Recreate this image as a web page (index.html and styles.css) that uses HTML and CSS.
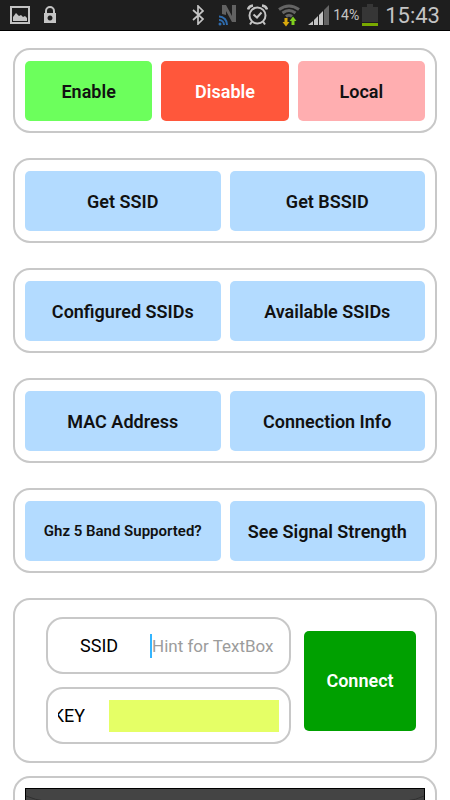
FILE: index.html
```html
<!DOCTYPE html>
<html lang="en">
<head>
    <meta charset="UTF-8">
    <meta name="viewport" content="width=device-width, initial-scale=1.0">
    <title>Wifi Manager</title>
    <link rel="stylesheet" href="styles.css">
</head>
<body>
    <header class="status-bar">
        <div class="status-left">
            <svg width="20" height="18" viewBox="0 0 20 18">
                <rect x="1" y="1" width="18" height="16" fill="none" stroke="#c4c4c4" stroke-width="2"/>
                <path d="M3 15V11L6 7L9 10L11 9L13 11L15 10L17 12V15Z" fill="#c4c4c4"/>
            </svg>
            <svg width="14" height="18" viewBox="0 0 14 18">
                <path d="M3 8V5a4 4 0 0 1 8 0V8" fill="none" stroke="#c4c4c4" stroke-width="2"/>
                <path d="M1 7H13V17H1ZM7 9.500a2.500 2.500 0 1 0 .01 0Z" fill="#c4c4c4" fill-rule="evenodd"/>
            </svg>
        </div>
        <div class="status-right">
            <svg width="12" height="20" viewBox="0 0 12 20">
                <path d="M1 5L11 14L6 19V1L11 6L1 15" fill="none" stroke="#c4c4c4" stroke-width="1.700"/>
            </svg>
            <svg class="nfc" width="19" height="22" viewBox="0 0 19 22">
                <path d="M4 10V1H8L14 12V1H18V18H14L8 7V11Z" fill="#626262"/>
                <g fill="none" stroke="#2f6cae" stroke-width="2">
                    <path d="M1 12.500a8 8 0 0 1 8 8.500"/>
                    <path d="M1 16a5 5 0 0 1 5 5"/>
                </g>
                <circle cx="2" cy="20" r="1.500" fill="#2f6cae"/>
            </svg>
            <svg class="alarm" width="21" height="22" viewBox="0 0 21 22">
                <g fill="none" stroke="#c4c4c4" stroke-width="2">
                    <circle cx="10.500" cy="11.500" r="8"/>
                    <path d="M6.500 10.500L10 13.500L14.500 8.500"/>
                    <path d="M1 5.500Q2 2 6 1.500M15 1.500Q19 2 20 5.500" stroke-width="2.500"/>
                    <path d="M5 17.500L3 20.500M16 17.500L18 20.500"/>
                </g>
            </svg>
            <svg class="wifi" width="22" height="23" viewBox="0 0 22 23">
                <g fill="none" stroke="#646464" stroke-width="3">
                    <path d="M1 5.500Q11 -1.500 21 5.500"/>
                    <path d="M4.500 9Q11 4 17.500 9"/>
                    <path d="M8 12.500Q11 10 14 12.500"/>
                </g>
                <path d="M6.500 14H9.500V18H11.500L8 22.500L4.500 18H6.500Z" fill="#d9a90c"/>
                <path d="M13.500 21V17H11.500L15 12.500L18.500 17H16.500V21Z" fill="#80d01e"/>
            </svg>
            <svg class="signal" width="21" height="21" viewBox="0 0 21 21">
                <path d="M0 20L5 16V20ZM6 15L10 11V20H6ZM11 10L15 6V20H11Z" fill="#c4c4c4"/>
                <path d="M16 5L21 0V20H16Z" fill="#646464"/>
            </svg>
            <span class="percent">14%</span>
            <svg width="16" height="22" viewBox="0 0 16 22">
                <path d="M0 3H5V0H11V3H16V18H0Z" fill="#363636"/>
                <path d="M0 19H16V22H0Z" fill="#79aa00"/>
            </svg>
            <span class="clock">15:43</span>
        </div>
    </header>

    <main class="content">
        <section class="card row">
            <button class="btn enable">Enable</button>
            <button class="btn disable">Disable</button>
            <button class="btn local">Local</button>
        </section>
        <section class="card row">
            <button class="btn">Get SSID</button>
            <button class="btn">Get BSSID</button>
        </section>
        <section class="card row">
            <button class="btn">Configured SSIDs</button>
            <button class="btn">Available SSIDs</button>
        </section>
        <section class="card row">
            <button class="btn">MAC Address</button>
            <button class="btn">Connection Info</button>
        </section>
        <section class="card row">
            <button class="btn small">Ghz 5 Band Supported?</button>
            <button class="btn">See Signal Strength</button>
        </section>

        <form class="card connect-card">
            <div class="fields">
                <div class="field ssid-field">
                    <label for="ssid">SSID</label>
                    <div class="ssid-box">
                        <input type="text" id="ssid" placeholder="Hint for TextBox">
                    </div>
                </div>
                <div class="field key-field">
                    <label for="key"><span>KEY</span></label>
                    <input type="text" id="key">
                </div>
            </div>
            <button type="button" class="btn connect">Connect</button>
        </form>

        <section class="card log-card">
            <div class="canvas">
                <svg width="100" height="12" viewBox="0 0 100 12"><path d="M0 7Q10 11 18 12" fill="none" stroke="#303030"/></svg>
                <svg width="100" height="12" viewBox="0 0 100 12"><path d="M100 7Q92 11 82 12" fill="none" stroke="#303030"/></svg>
            </div>
        </section>
    </main>
</body>
</html>
```

FILE: styles.css
```css
* {
    box-sizing: border-box;
}

body {
    margin: 0;
    height: 100vh;
    display: flex;
    flex-direction: column;
    background-color: white;
    color: #111;
    font-family: Roboto, sans-serif;
}

.status-bar {
    display: flex;
    justify-content: space-between;
    align-items: center;
    flex-shrink: 0;
    height: 31px;
    padding: 0 10px;
    background-color: #1e1e1e;
    border-bottom: 1px solid black;
    color: #c4c4c4;
}

.status-left,
.status-right {
    display: flex;
    align-items: center;
}

.status-left {
    gap: 13px;
}

.nfc {
    margin-left: 14px;
}

.alarm,
.wifi {
    margin-left: 10px;
}

.signal {
    margin-left: 8px;
}

.percent {
    margin: 0 3px 0 4px;
    font-size: 14px;
}

.clock {
    margin-left: 7px;
    font-size: 22px;
}

.content {
    flex: 1;
    overflow-y: auto;
    scrollbar-width: none;
    padding: 17px 13px;
}

.card {
    margin-bottom: 25px;
    padding: 11px 10px 10px;
    border: 2px solid #c8c8c8;
    border-radius: 17px;
}

.row {
    display: flex;
    gap: 9px;
}

.btn {
    flex: 1 1 0;
    height: 60px;
    padding: 0;
    border: none;
    border-radius: 5px;
    background-color: #b3dbff;
    color: #111;
    font-family: inherit;
    font-size: 18px;
    font-weight: 600;
    cursor: pointer;
}

.small {
    font-size: 15px;
}

.enable {
    background-color: #6cff5c;
}

.disable {
    background-color: #ff573b;
    color: white;
}

.local {
    background-color: #ffaeb0;
}

.connect-card {
    display: flex;
    align-items: center;
    gap: 13px;
    margin-bottom: 13px;
    padding: 17px 19px 17px 31px;
}

.fields {
    flex: 1;
    display: flex;
    flex-direction: column;
    gap: 13px;
    min-width: 0;
}

.field {
    display: flex;
    align-items: center;
    height: 57px;
    padding: 0 10px;
    border: 2px solid #c8c8c8;
    border-radius: 17px;
    color: black;
    font-size: 18px;
}

.field input {
    flex: 1;
    min-width: 0;
    width: 100%;
    height: 32px;
    padding: 0;
    border: none;
    outline: none;
    background: none;
    color: black;
    font-family: inherit;
    font-size: 17px;
}

.ssid-field label {
    width: 92px;
    padding-left: 22px;
}

.ssid-box {
    flex: 1;
    height: 24px;
    display: flex;
    align-items: center;
    border-left: 2px solid #33b5ff;
}

.field input::placeholder {
    color: #9c9c9c;
    opacity: 1;
}

/* the key label is too narrow for its text, so it is cut on the left */
.key-field label {
    display: flex;
    justify-content: flex-end;
    width: 27px;
    margin-right: 24px;
    overflow: hidden;
}

.field #key {
    background-color: #e5ff66;
}

.connect {
    flex: 0 0 112px;
    height: 100px;
    background-color: #00a000;
    color: white;
}

.log-card {
    margin-bottom: 0;
    padding: 10px;
}

.canvas {
    display: flex;
    justify-content: space-between;
    height: 200px;
    border: 1px solid black;
    background-color: #444;
}
```
